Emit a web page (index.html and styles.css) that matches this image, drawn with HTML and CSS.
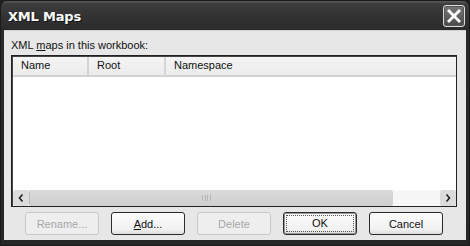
FILE: index.html
```html
<!DOCTYPE html>
<html>
<head>
<meta charset="utf-8">
<link rel="stylesheet" href="styles.css">
</head>
<body>
<div class="window">
  <div class="titlebar">
    <span class="title">XML Maps</span>
    <button class="close" aria-label="Close">
      <svg width="14" height="14" viewBox="0 0 14 14"><path d="M2 2 L12 12 M12 2 L2 12" stroke="#fff" stroke-width="2.8" stroke-linecap="square"/></svg>
    </button>
  </div>
  <div class="client">
    <div class="label">XML <u>m</u>aps in this workbook:</div>
    <div class="listbox">
      <div class="header">
        <div class="col c1">Name</div>
        <div class="col c2">Root</div>
        <div class="col c3">Namespace</div>
        <div class="col c4"></div>
      </div>
      <div class="rows"></div>
      <div class="hscroll">
        <div class="arrow">
          <svg width="6" height="8" viewBox="0 0 6 8"><path d="M4.5 0.5 L1.5 4 L4.5 7.5" fill="none" stroke="#222" stroke-width="1.6"/></svg>
        </div>
        <div class="thumb"><span class="grip"></span></div>
        <div class="track"></div>
        <div class="arrow">
          <svg width="6" height="8" viewBox="0 0 6 8"><path d="M1.5 0.5 L4.5 4 L1.5 7.5" fill="none" stroke="#222" stroke-width="1.6"/></svg>
        </div>
      </div>
    </div>
    <div class="buttons">
      <button class="btn disabled">Rename...</button>
      <button class="btn"><u>A</u>dd...</button>
      <button class="btn disabled">Delete</button>
      <button class="btn default"><span class="focus">OK</span></button>
      <button class="btn">Cancel</button>
    </div>
  </div>
</div>
</body>
</html>
```
FILE: styles.css
```css
html, body {
  margin: 0;
  padding: 0;
  background: #1e1e1e;
}
body {
  width: 470px;
  height: 246px;
  overflow: hidden;
  font-family: "Liberation Sans", Arial, sans-serif;
  font-size: 11px;
  color: #111;
}
.window {
  width: 470px;
  height: 246px;
  display: flex;
  flex-direction: column;
  background: linear-gradient(#5a5a5a 0px, #3c3c3c 3px, #333 15px, #2a2a2a 30px, #262626 100%);
  border-radius: 7px 7px 0 0;
  box-sizing: border-box;
  border: 1px solid #1a1a1a;
}
.titlebar {
  height: 29px;
  display: flex;
  align-items: center;
  padding: 0 4px 0 7px;
  flex: none;
}
.title {
  font-family: "DejaVu Sans", Verdana, sans-serif;
  font-weight: bold;
  font-size: 13px;
  color: #fff;
  text-shadow: 1px 1px 0 #111;
  letter-spacing: -0.2px;
  margin-top: 1px;
}
.close {
  margin-left: auto;
  width: 22px;
  height: 22px;
  padding: 0;
  border: 1px solid #ddd;
  border-radius: 3px;
  background: linear-gradient(#777, #4a4a4a);
  display: flex;
  align-items: center;
  justify-content: center;
  box-shadow: inset 0 0 0 1px #555;
}
.client {
  flex: 1;
  margin: 0 3px 5px 3px;
  background: #e7e7e7;
  display: flex;
  flex-direction: column;
  padding: 9px 9px 0 7px;
  box-shadow: inset 0 1px 0 #cfcfcf;
}
.label {
  height: 16px;
  line-height: 12px;
}
.listbox {
  height: 152px;
  border: 1px solid #222;
  box-shadow: inset 1px 1px 0 #444;
  background: #fff;
  display: flex;
  flex-direction: column;
  box-sizing: border-box;
}
.header {
  height: 18px;
  display: flex;
  background: linear-gradient(#f4f4f4, #ececec);
  border-bottom: 2px solid #d2d2d2;
  flex: none;
  margin: 1px 0 0 1px;
}
.col {
  line-height: 17px;
  padding-left: 8px;
  box-sizing: border-box;
}
.col.c1, .col.c2 {
  border-right: 2px solid #d6d6d6;
}
.col.c1 { width: 76px; }
.col.c2 { width: 77px; }
.col.c3 { width: 80px; }
.col.c4 { flex: 1; }
.rows {
  flex: 1;
}
.hscroll {
  height: 16px;
  display: flex;
  flex: none;
  margin-left: 1px;
}
.arrow {
  width: 16px;
  height: 16px;
  background: #dcdcdc;
  display: flex;
  align-items: center;
  justify-content: center;
  border-radius: 2px;
  flex: none;
}
.thumb {
  width: 364px;
  background: linear-gradient(#dadada, #cfcfcf);
  border-left: 1px solid #bbb;
  border-radius: 2px;
  display: flex;
  align-items: center;
  justify-content: center;
  box-sizing: border-box;
}
.grip {
  width: 7px;
  height: 6px;
  border-left: 1px solid #b5b5b5;
  border-right: 1px solid #b5b5b5;
  background: linear-gradient(90deg, transparent 2px, #b5b5b5 2px, #b5b5b5 3px, transparent 3px, transparent 4px, #b5b5b5 4px, #b5b5b5 5px, transparent 5px);
  margin-left: -10px;
}
.track {
  flex: 1;
  background: #f7f7f7;
}
.buttons {
  display: flex;
  gap: 12px;
  padding-left: 14px;
  margin-top: 5px;
}
.btn {
  width: 74px;
  height: 23px;
  font-family: "Liberation Sans", Arial, sans-serif;
  font-size: 11px;
  color: #111;
  background: linear-gradient(#fdfdfd, #f0f0f0 80%, #dcdcdc);
  border: 1px solid #2a2a2a;
  border-radius: 3px;
  padding: 0;
}
.btn.disabled {
  border-color: #c8c8c8;
  color: #a8a8a8;
  background: #eeeeee;
}
.btn.default {
  box-shadow: inset 0 0 0 1px #9a9a9a;
  padding: 2px;
}
.focus {
  display: block;
  height: 100%;
  border: 1px dotted #555;
  box-sizing: border-box;
  line-height: 15px;
}
```
